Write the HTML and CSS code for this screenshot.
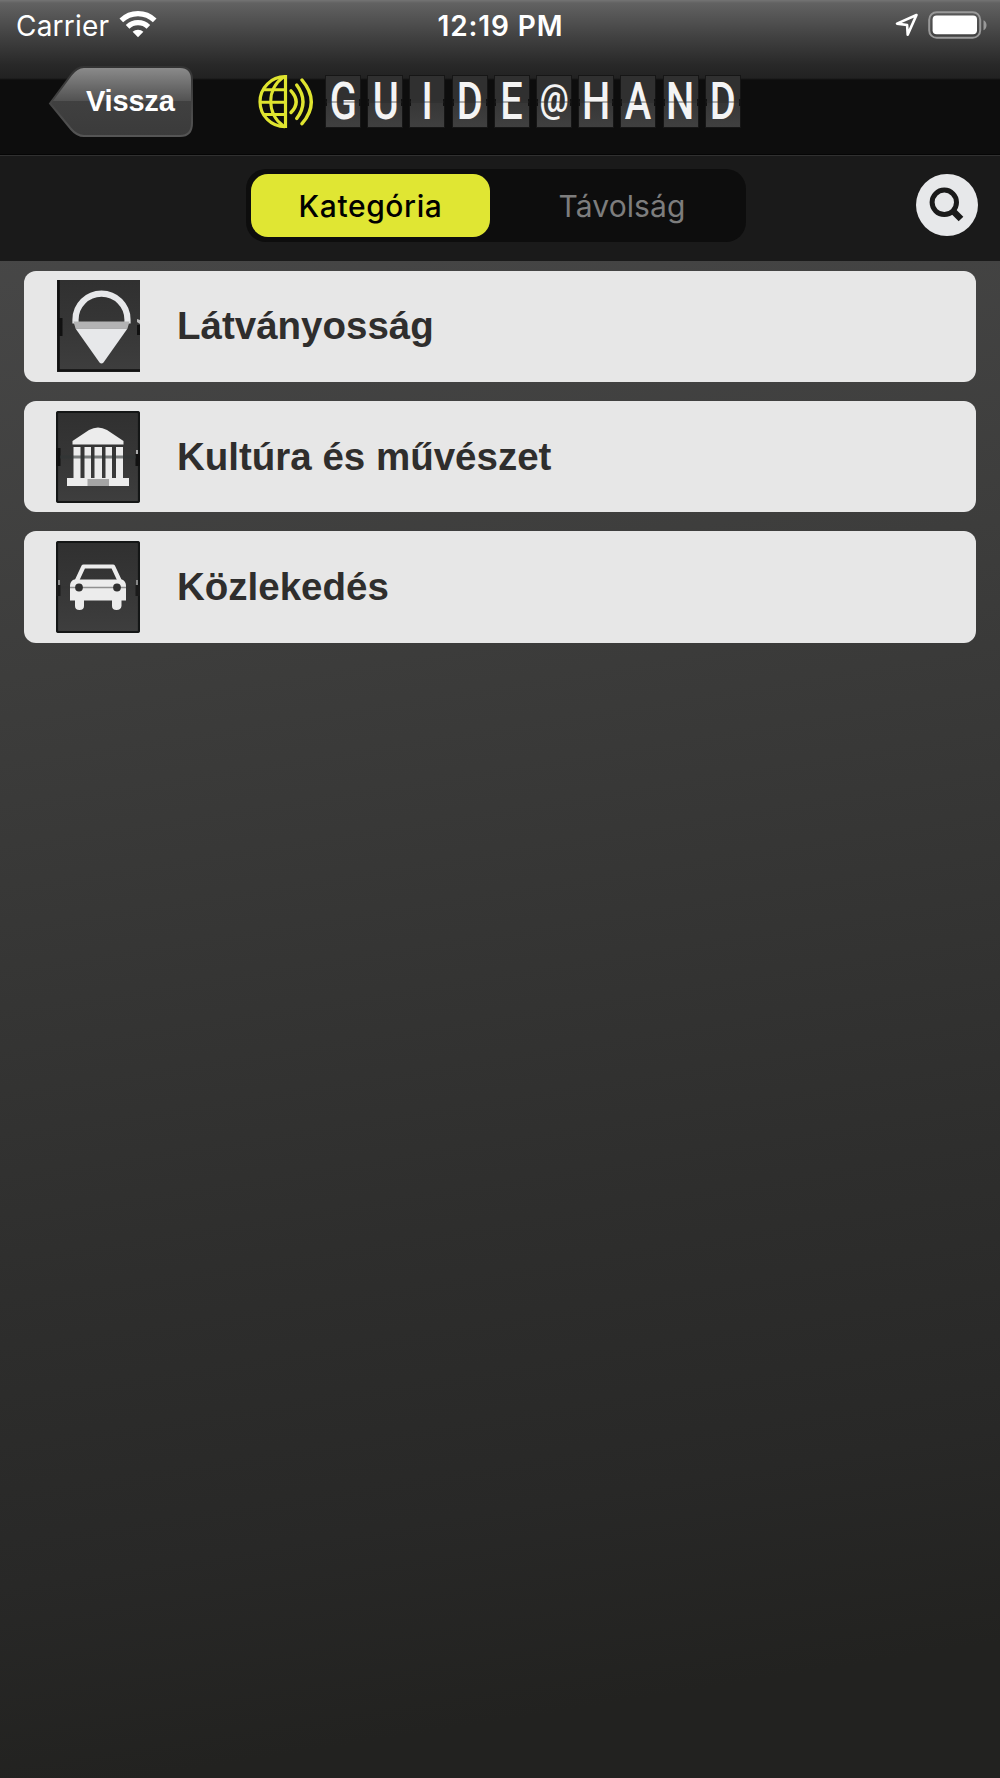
FILE: index.html
```html
<!DOCTYPE html>
<html lang="hu">
<head>
<meta charset="utf-8">
<title>Guide@Hand</title>
<link rel="stylesheet" href="styles.css">
</head>
<body>
<div class="screen">
  <header class="header">
    <div class="status">
      <div class="status-left">
        <span class="carrier">Carrier</span>
        <svg class="wifi" width="38" height="28" viewBox="0 0 38 28">
          <g fill="none" stroke="#fff" stroke-width="5.2">
            <path d="M2.3 10.3a24 24 0 0 1 33.4 0"/>
            <path d="M8.6 16.8a15 15 0 0 1 20.8 0"/>
          </g>
          <path d="M19 27.2l-5.4-5.4a7.8 7.8 0 0 1 10.8 0z" fill="#fff"/>
        </svg>
      </div>
      <span class="clock">12:19 PM</span>
      <div class="status-right">
        <svg width="24" height="24" viewBox="0 0 24 24"><path d="M21.5 2L2 10.6l10.1 1.4.6 9.6z" fill="none" stroke="#fff" stroke-width="2.6" stroke-linejoin="round"/></svg>
        <svg class="battery" width="60" height="28" viewBox="0 0 60 28">
          <rect x="1.2" y="1.2" width="51" height="25.6" rx="7.5" fill="none" stroke="#999" stroke-width="2"/>
          <rect x="4.6" y="4.6" width="44.4" height="18.6" rx="4" fill="#fff"/>
          <path d="M55.5 9.2c4 1.5 4 8.500 0 10z" fill="#999"/>
        </svg>
      </div>
    </div>
    <div class="nav">
      <button class="back">
        <svg class="back-shape" width="147" height="74" viewBox="0 0 147 74">
          <defs>
            <linearGradient id="backFill" x1="0" y1="0" x2="0" y2="1">
              <stop offset="0" stop-color="#8c8c8c"/><stop offset=".49" stop-color="#525252"/>
              <stop offset=".5" stop-color="#404040"/><stop offset="1" stop-color="#3b3b3b"/>
            </linearGradient>
            <linearGradient id="backEdge" x1="0" y1="0" x2="0" y2="1">
              <stop offset="0" stop-color="#333"/><stop offset="1" stop-color="#555"/>
            </linearGradient>
          </defs>
          <path d="M2 38.500L23 10Q29 2 36 2H132Q144 2 144 15V58Q144 71 132 71H36Q29 71 23 64Z" fill="url(#backFill)" stroke="url(#backEdge)" stroke-width="2"/>
        </svg>
        <span class="back-label">Vissza</span>
      </button>
      <div class="brand">
        <svg class="globe" width="57" height="54" viewBox="0 0 57 54">
          <g fill="none" stroke="#dfe42f" stroke-width="3">
            <path d="M27 1.700A25 25 0 0 0 27 51.700" stroke-width="3.200"/>
            <path d="M25.500 2C8.500 14 8.500 39 25.500 51"/>
            <path d="M6 14.800H27M2 27.300H27M6 39.500H27"/>
            <path d="M27.500 0V53" stroke-width="3.200"/>
            <g stroke-linecap="round" stroke-width="3.400">
              <path d="M33 15.800Q43.300 27 33 37.500"/>
              <path d="M38.700 10Q51.300 27 38.700 43.500"/>
              <path d="M44 5Q62.600 27 44 48.700"/>
            </g>
          </g>
        </svg>
        <div class="tiles">
          <span class="tile"><b>G</b></span><span class="tile"><b>U</b></span><span class="tile"><b>I</b></span><span class="tile"><b>D</b></span><span class="tile"><b>E</b></span><span class="tile tile-at"><b>@</b></span><span class="tile"><b>H</b></span><span class="tile"><b>A</b></span><span class="tile"><b>N</b></span><span class="tile"><b>D</b></span>
        </div>
      </div>
    </div>
  </header>
  <div class="toolbar">
    <div class="segmented">
      <button class="segment segment-active">Kategória</button>
      <button class="segment">Távolság</button>
    </div>
    <button class="search" aria-label="Keresés">
      <svg width="62" height="62" viewBox="0 0 62 62">
        <circle cx="28.300" cy="28.300" r="12.200" fill="none" stroke="#1a1a1a" stroke-width="5"/>
        <path d="M36.500 36.500L45 45" stroke="#1a1a1a" stroke-width="6.600"/>
      </svg>
    </button>
  </div>
  <main class="list">
    <a class="row">
      <svg class="icon" width="84" height="92" viewBox="0 0 84 92">
        <defs>
          <linearGradient id="tileFill" x1="0" y1="0" x2="0" y2="1">
            <stop offset="0" stop-color="#303030"/><stop offset=".5" stop-color="#363636"/><stop offset="1" stop-color="#3e3e3e"/>
          </linearGradient>
        </defs>
        <rect x="1" width="83" height="92" fill="url(#tileFill)"/>
        <path d="M2.500 0V90.500H84" fill="none" stroke="#111" stroke-width="2.600"/>
        <path d="M2 38h4.500v18h-4.500zM81 45h3v10h-3z" fill="#111"/><path d="M81 39l3 1v4l-3-2z" fill="#bbb"/>
        <path d="M19.500 43.500V39.700a26 26 0 0 1 52 0V43.500" fill="none" stroke="#e7e8ea" stroke-width="6.200"/>
        <path d="M17.500 41.500H73.500L71.500 48.500H19.500Z" fill="#b3b3b4"/>
        <path d="M19.500 48.500H71.500L47.500 82.500Q45.500 84.500 43.500 82.500Z" fill="#e7e8ea"/>
      </svg>
      <span class="row-label">Látványosság</span>
    </a>
    <a class="row">
      <svg class="icon" width="84" height="92" viewBox="0 0 84 92">
        <rect x="1" y="1" width="82" height="90" rx="1.500" fill="url(#tileFill)" stroke="#141616" stroke-width="2.200"/>
        <path d="M0 37h4.500v18h-4.500zM79.500 43h4.500v12h-4.500z" fill="#111"/><path d="M80 39h2v4h-2z" fill="#aaa"/>
        <path d="M16.500 33.500V30L33 19Q42 14 51 19L67.500 30V33.500Z" fill="#ececec"/>
        <path d="M17.500 36H24.500V67H17.500ZM28.500 36H35V67H28.500ZM38.500 36H46V67H38.500ZM49.500 36H56V67H49.500ZM60 36H67V67H60Z" fill="#ececec"/>
        <path d="M4 46H80" stroke="#303535" stroke-opacity=".6" stroke-width="3"/>
        <path d="M11 67H73V75H11Z" fill="#ececec"/><path d="M31.500 68H53V75H31.500Z" fill="#a5a5a5"/>
      </svg>
      <span class="row-label">Kultúra és művészet</span>
    </a>
    <a class="row">
      <svg class="icon" width="84" height="92" viewBox="0 0 84 92">
        <rect x="1" y="1" width="82" height="90" rx="1.500" fill="url(#tileFill)" stroke="#141616" stroke-width="2.200"/>
        <path d="M0 44h4.500v11h-4.500zM79.500 44h4.500v11h-4.500z" fill="#1a1a1a"/><path d="M2 39h2v5h-2zM80 39h2v5h-2z" fill="#888"/>
        <path d="M20.500 40.500L27.500 25.500H57L64 40.500" fill="none" stroke="#ececec" stroke-width="4.200" stroke-linejoin="round"/>
        <path d="M18 38.500H66Q70 40 70 45V59.500H65.500V65Q65 69 60.500 69T56 65V59.500H28V65Q28 69 23.500 69T19 65V59.500H14V45Q14 40 18 38.500Z" fill="#ececec"/>
        <path d="M5 46.500H79" stroke="#333" stroke-opacity=".5" stroke-width="1.500"/>
        <circle cx="23" cy="46.500" r="3.900" fill="#303030"/><circle cx="61" cy="46.500" r="3.900" fill="#303030"/>
      </svg>
      <span class="row-label">Közlekedés</span>
    </a>
  </main>
</div>
</body>
</html>
```
FILE: styles.css
```css
* { box-sizing: border-box; }
body { margin: 0; font-family: "Inter", sans-serif; }
button { border: 0; padding: 0; background: none; font: inherit; }
svg { display: block; flex: none; }
.screen {
  width: 1000px;
  height: 1778px;
  overflow: hidden;
  background: linear-gradient(171deg, #484848 10%, #3d3d3c 35%, #353534 52%, #2e2e2d 67%, #282827 82%, #222220 93%);
}
.header {
  height: 155px;
  border-bottom: 1px solid #050505;
  background: linear-gradient(#747474 0, #626262 3px, #5b5b5b 10px, #404040 38px, #292929 64px, #222 78px, #0d0d0d 80px, #0d0d0d 100%);
}
.status {
  display: grid;
  grid-template-columns: 1fr auto 1fr;
  align-items: center;
  height: 51px;
  padding: 0 12px 0 16px;
  color: #fff;
}
.status-left { display: flex; align-items: center; gap: 10px; }
.status-right { display: flex; align-items: center; justify-content: flex-end; gap: 9px; margin-top: -2px; }
.carrier { font-size: 28px; letter-spacing: .2px; }
.clock { padding-right: 3px; font-size: 28px; font-weight: 600; letter-spacing: .9px; }
.wifi { margin-top: -4px; }
.nav { display: flex; padding-left: 48px; }
.back { display: grid; width: 147px; height: 74px; margin-top: 14px; }
.back-shape, .back-label { grid-area: 1 / 1; }
.back-label {
  place-self: center start;
  margin: -2px 0 0 38px;
  color: #fff;
  font: bold 29px "Liberation Sans", sans-serif;
  letter-spacing: -.2px;
}
.brand { display: flex; margin: 24px 0 0 63px; }
.tiles { display: flex; gap: 6.200px; margin-left: 10px; }
.tile {
  position: relative;
  display: flex;
  align-items: center;
  justify-content: center;
  width: 36px;
  height: 53px;
  border: 1px solid #161616;
  background: linear-gradient(#303030 0 50%, #363636 50%, #404040);
  color: #f4f4f4;
}
/* hinge line across the flap, with a notch at each edge */
.tile::before, .tile::after { content: ""; position: absolute; }
.tile::before { inset: 25px 0 auto; height: 2px; z-index: 1; background: rgba(40, 40, 40, .35); }
.tile::after { inset: 23px -1px auto; height: 7px; border: solid #111; border-width: 0 2px; }
.tile b { font: 500 51px/51px "Roboto", sans-serif; transform: scaleX(.78); }
.tile-at b { margin-top: -5px; font-size: 38px; transform: scaleX(.86); }
.toolbar {
  display: flex;
  justify-content: space-between;
  height: 106px;
  padding: 13px 22px 0 246px;
  border-top: 1px solid #303030;
  background: #1a1a1a;
}
.segmented {
  display: flex;
  width: 500px;
  height: 73px;
  padding: 5px;
  border-radius: 20px;
  background: #0d0d0d;
}
.segment { flex: 1; padding: 1px 0 0 13px; border-radius: 17px; color: #7d7d7d; font-size: 30px; letter-spacing: .1px; }
.segment-active { flex: 0 0 239px; padding-left: 0; background: #e0e633; color: #000; font-weight: 500; letter-spacing: .6px; }
.search { width: 62px; height: 62px; margin-top: 5px; border-radius: 50%; background: #e7e8ea; }
.list { display: flex; flex-direction: column; gap: 19.200px; padding: 9.700px 24.300px 0; }
.row {
  display: flex;
  align-items: center;
  gap: 37px;
  height: 111.200px;
  padding-left: 31.700px;
  border-radius: 12px;
  background: #e7e7e7;
  color: #2f2e2d;
}
.row-label { font: bold 38.500px "Liberation Sans", sans-serif; }
```
